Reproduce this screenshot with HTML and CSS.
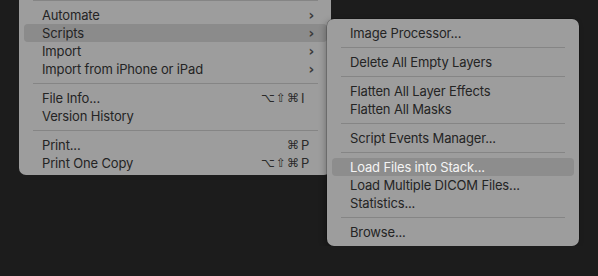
FILE: index.html
```html
<!DOCTYPE html>
<html lang="en">
<head>
    <meta charset="UTF-8">
    <title>Menu</title>
    <link rel="stylesheet" href="styles.css">
</head>
<body>
    <div class="escena">
        <div class="menu principal">
            <div class="separador"></div>
            <div class="item"><span>Automate</span><span class="flecha">&#x203A;</span></div>
            <div class="item activo"><span>Scripts</span><span class="flecha">&#x203A;</span></div>
            <div class="item"><span>Import</span><span class="flecha">&#x203A;</span></div>
            <div class="item"><span>Import from iPhone or iPad</span><span class="flecha">&#x203A;</span></div>
            <div class="separador"></div>
            <div class="item"><span>File Info...</span><span class="atajo"><span class="mods">&#x2325;&#x21E7;&#x2318;</span><span class="tecla">I</span></span></div>
            <div class="item"><span>Version History</span></div>
            <div class="separador"></div>
            <div class="item"><span>Print...</span><span class="atajo"><span class="mods">&#x2318;</span><span class="tecla">P</span></span></div>
            <div class="item"><span>Print One Copy</span><span class="atajo"><span class="mods">&#x2325;&#x21E7;&#x2318;</span><span class="tecla">P</span></span></div>
        </div>
        <div class="menu submenu">
            <div class="item"><span>Image Processor...</span></div>
            <div class="separador"></div>
            <div class="item"><span>Delete All Empty Layers</span></div>
            <div class="separador"></div>
            <div class="item"><span>Flatten All Layer Effects</span></div>
            <div class="item"><span>Flatten All Masks</span></div>
            <div class="separador"></div>
            <div class="item"><span>Script Events Manager...</span></div>
            <div class="separador"></div>
            <div class="item seleccionado"><span>Load Files into Stack...</span></div>
            <div class="item"><span>Load Multiple DICOM Files...</span></div>
            <div class="item"><span>Statistics...</span></div>
            <div class="separador"></div>
            <div class="item"><span>Browse...</span></div>
        </div>
    </div>
</body>
</html>
```

FILE: styles.css
```css
/* Fondo general */
body {
    margin: 0;
    background-color: #1c1c1c;
    font-family: Inter, "Noto Sans", sans-serif;
    font-size: 13px;
    letter-spacing: -0.15px;
    color: #242424;
    overflow: hidden;
}

.escena {
    display: flex;
    align-items: flex-start;
    padding-left: 19px;
}

/* Menus */
.menu {
    background: #9d9d9d;
    border-radius: 7px;
    box-sizing: border-box;
}

.principal {
    width: 312px;
    margin-top: -5px;
    padding: 0 4px 3px 5px;
    border-radius: 0 0 7px 7px;
}

.submenu {
    width: 252px;
    margin-top: 19px;
    margin-left: -4px;
    padding: 5px;
    box-shadow: 0 0 0 0.5px rgba(0, 0, 0, 0.35), -2px 2px 6px rgba(0, 0, 0, 0.25);
}

/* Filas */
.item {
    display: flex;
    align-items: center;
    justify-content: space-between;
    height: 18px;
    padding: 0 12px 0 18px;
    border-radius: 4px;
    white-space: nowrap;
}

.activo {
    background: #8b8b8b;
}

.seleccionado {
    background: #8d8d8d;
    color: #f4f4f4;
}

.flecha {
    font-family: "DejaVu Sans", sans-serif;
    font-size: 14px;
    font-weight: bold;
    color: #3a3a3a;
    margin-right: 1px;
}

.atajo {
    display: flex;
    align-items: center;
    font-family: "DejaVu Sans", sans-serif;
    font-size: 12px;
    color: #2a2a2a;
}

.mods {
    letter-spacing: 1px;
}

.tecla {
    width: 14px;
    padding-left: 1px;
    font-family: Inter, sans-serif;
    font-size: 13px;
}

/* Separadores */
.separador {
    height: 11px;
    display: flex;
    align-items: center;
    padding: 0 9px;
}

.separador::before {
    content: "";
    flex: 1;
    height: 1px;
    background: #858585;
}
```
